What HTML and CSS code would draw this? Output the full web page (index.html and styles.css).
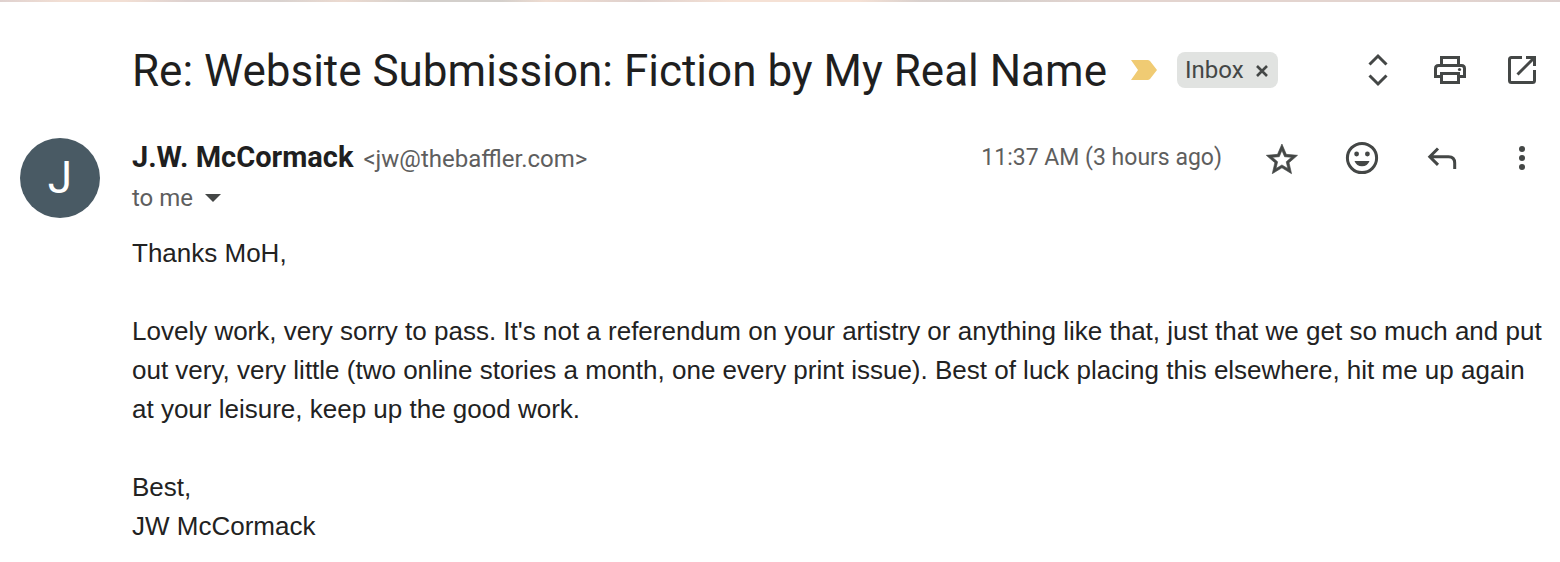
FILE: index.html
```html
<!DOCTYPE html>
<html lang="en">
<head>
<meta charset="utf-8">
<title>Re: Website Submission: Fiction by My Real Name</title>
<link rel="stylesheet" href="styles.css">
</head>
<body>
<div class="backdrop-strip"></div>
<main class="thread">
  <header class="subject-bar">
    <h1 class="subject">Re: Website Submission: Fiction by My Real Name</h1>
    <svg class="important" viewBox="0 0 26 20" aria-hidden="true"><path d="M0 0H16.500Q18 0 19 1L26 10L19 19Q18 20 16.500 20H0L7 10Z"/></svg>
    <span class="label">Inbox <button class="label-remove" aria-label="Remove label Inbox"><svg viewBox="0 0 12 12"><path d="M1 1L11 11M11 1L1 11" stroke-width="2.600"/></svg></button></span>
    <div class="thread-actions">
      <button class="icon-button" aria-label="Expand all"><svg viewBox="0 0 40 40"><path class="line" d="M11.500 14.500L20 6L28.500 14.500M11.500 25.500L20 34L28.500 25.500"/></svg></button>
      <button class="icon-button" aria-label="Print all"><svg viewBox="0 0 40 40"><path class="line" d="M11.500 15V7.500H28.500V15M11 26.500H5.500V18.500Q5.500 15.500 8.500 15.500H31.500Q34.500 15.500 34.500 18.500V26.500H29M11.500 23.500H28.500V32.500H11.500Z"/><circle cx="29.500" cy="19.500" r="1.600"/></svg></button>
      <button class="icon-button" aria-label="Open in new window"><svg viewBox="0 0 40 40"><path class="line" d="M20 7.500H9.500Q7.500 7.500 7.500 9.500V30.500Q7.500 32.500 9.500 32.500H30.500Q32.500 32.500 32.500 30.500V20M24 7.500H32.500V16M32 8L15.500 24.500"/></svg></button>
    </div>
  </header>
  <article class="message">
    <div class="avatar">J</div>
    <div class="content">
      <header class="message-header">
        <div class="sender"><strong class="name">J.W. McCormack</strong><span class="email">&lt;jw@thebaffler.com&gt;</span></div>
        <time class="time">11:37 AM (3 hours ago)</time>
        <div class="message-actions">
          <button class="icon-button" aria-label="Star"><svg viewBox="0 0 40 40"><path transform="translate(1.200 2.900) scale(1.560)" stroke="currentColor" stroke-width="0.400" d="M22 9.240l-7.190-.62L12 2 9.190 8.630 2 9.240l5.460 4.730L5.820 21 12 17.270 18.180 21l-1.630-7.030L22 9.240zM12 15.400l-3.760 2.270 1-4.280-3.320-2.880 4.380-.38L12 6.100l1.710 4.040 4.380.38-3.320 2.880 1 4.280L12 15.400z"/></svg></button>
          <button class="icon-button" aria-label="Add reaction"><svg viewBox="0 0 40 40"><circle class="line" cx="20" cy="20" r="14.600"/><circle cx="14.600" cy="16" r="2.400"/><circle cx="25.400" cy="16" r="2.400"/><path d="M12.500 23H27.500Q25.500 28.300 20 28.300T12.500 23Z"/></svg></button>
          <button class="icon-button" aria-label="Reply"><svg viewBox="0 0 40 40"><path class="line" d="M16 10.500L7.800 18.700L16 26.900M8 18.700H26.500Q32.700 18.700 32.700 25V31"/></svg></button>
          <button class="icon-button" aria-label="More"><svg viewBox="0 0 40 40"><circle cx="20" cy="11" r="3"/><circle cx="20" cy="20" r="3"/><circle cx="20" cy="29" r="3"/></svg></button>
        </div>
      </header>
      <button class="recipient">to me <svg viewBox="0 0 16 8"><path d="M0 0H16L8 8Z"/></svg></button>
      <div class="body">
        <p>Thanks MoH,</p>
        <p>Lovely work, very sorry to pass. It's not a referendum on your artistry or anything like that, just that we get so much and put out very, very little (two online stories a month, one every print issue). Best of luck placing this elsewhere, hit me up again at your leisure, keep up the good work.</p>
        <p>Best,<br>JW McCormack</p>
      </div>
    </div>
  </article>
</main>
</body>
</html>
```
FILE: styles.css
```css
* { box-sizing: border-box; }
body { margin: 0; background: #fff; color: #1f1f1f; font-family: Roboto, sans-serif; }
button { border: 0; padding: 0; background: none; color: inherit; font: inherit; }
svg { display: block; fill: currentColor; }
.backdrop-strip { height: 2px; background: linear-gradient(90deg, #dfd1cf 0%, #f2dfd4 4%, #f2dfd4 8%, #ddd1cf 12%, #d9d2cf 18%, #ecdad0 22%, #d3cfcb 27%, #d3cfcb 32%, #efdcd1 35%, #dfd1cd 41%, #f5e1d5 47%, #f5e1d5 55%, #d9d0cd 59%, #d5cfcc 64%, #e3d4cf 70%, #e3d4cf 92%, #dcd0ce 100%); }
.thread { padding: 36px 18px 0 20px; }
.subject-bar { display: flex; align-items: center; height: 64px; padding-left: 112px; }
.subject { margin: 0; padding-top: 2px; font: 400 44px/56px Roboto, sans-serif; white-space: nowrap; }
.important { width: 26px; height: 20px; margin-left: 24px; color: #f0cb73; }
.label { display: flex; align-items: center; gap: 12px; height: 36px; margin-left: 20px; padding: 0 10px 0 8px; border-radius: 8px; background: #e1e3e1; color: #444746; font: 24px/36px Roboto, sans-serif; }
.label-remove { padding-top: 2px; }
.label-remove svg { width: 12px; height: 12px; fill: none; stroke: currentColor; }
.icon-button { width: 40px; height: 40px; color: #444746; }
.icon-button svg { width: 40px; height: 40px; }
.line { fill: none; stroke: currentColor; stroke-width: 3; }
.thread-actions { display: flex; gap: 32px; margin-left: auto; }
.message { display: flex; gap: 32px; margin-top: 36px; }
.avatar { flex: none; width: 80px; height: 80px; border-radius: 50%; background: #495a64; color: #fff; font: 44px/80px Roboto, sans-serif; text-align: center; }
.content { flex: 1; }
.message-header { display: flex; align-items: center; height: 40px; color: #5e5e5e; font: 24px/40px Roboto, sans-serif; }
.sender { display: flex; align-items: baseline; gap: 10px; }
.name { color: #1f1f1f; font-size: 29px; }
.time { margin-left: auto; font-size: 23px; }
.message-actions { display: flex; gap: 40px; margin-left: 40px; }
.recipient { display: flex; align-items: center; gap: 12px; height: 40px; color: #5e5e5e; font: 24px/40px Roboto, sans-serif; }
.recipient svg { width: 16px; height: 8px; color: #444746; }
.body { margin-top: 16px; color: #222; font: 26px/39px "Liberation Sans", Arial, sans-serif; }
.body p { margin: 0 0 39px; }
.body p:last-child { margin-bottom: 0; }
```
